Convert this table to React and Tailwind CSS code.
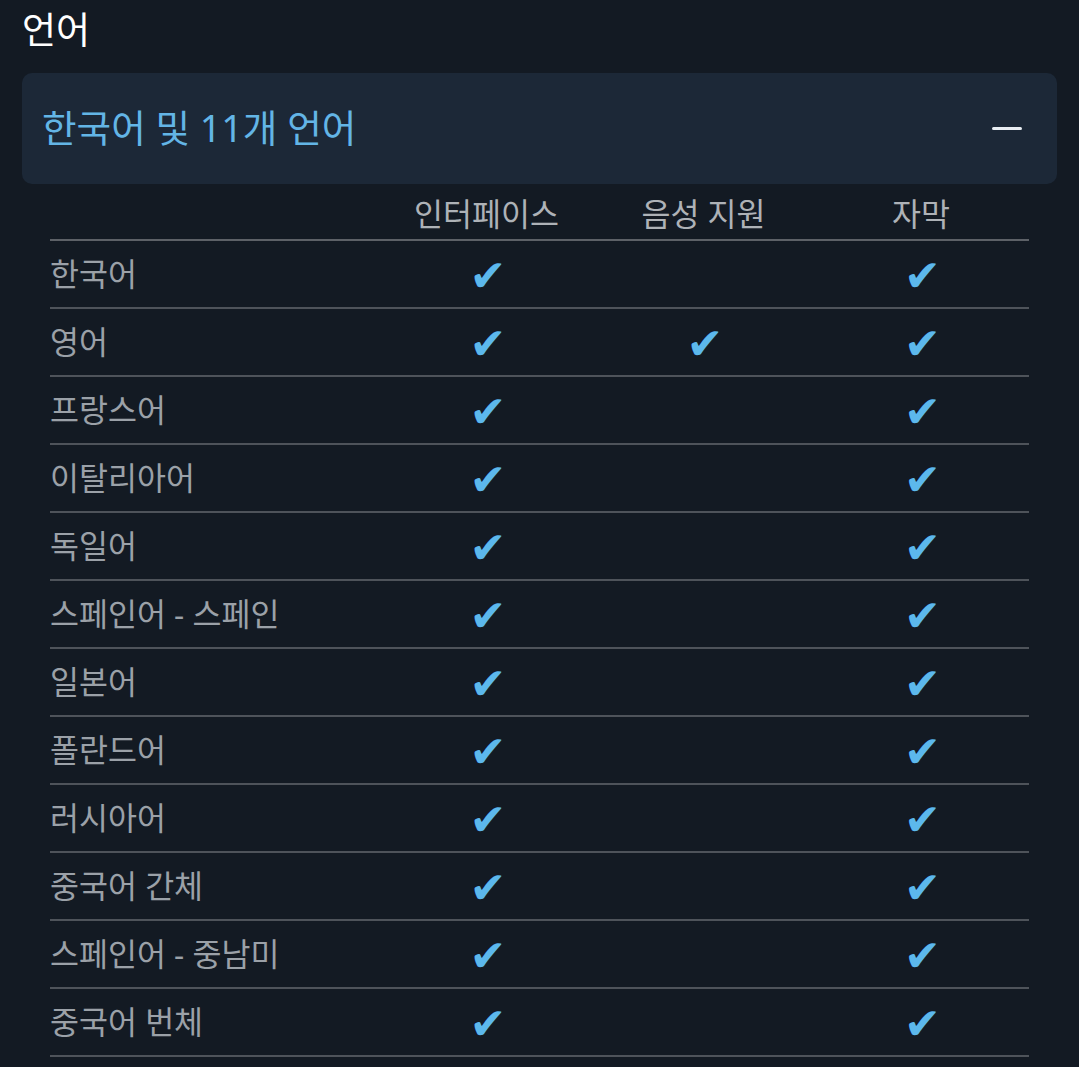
import React from 'react';

const rows = [
  ['한국어', true, false, true],
  ['영어', true, true, true],
  ['프랑스어', true, false, true],
  ['이탈리아어', true, false, true],
  ['독일어', true, false, true],
  ['스페인어 - 스페인', true, false, true],
  ['일본어', true, false, true],
  ['폴란드어', true, false, true],
  ['러시아어', true, false, true],
  ['중국어 간체', true, false, true],
  ['스페인어 - 중남미', true, false, true],
  ['중국어 번체', true, false, true],
];

const font = { fontFamily: '"Noto Sans", "Noto Sans CJK KR", sans-serif' };

function Check({ on }) {
  return (
    <span
      className="pt-[4px] pl-[3px] text-center text-[44px] leading-none text-[#5cb8ec]"
      style={{ fontFamily: '"DejaVu Sans", sans-serif' }}
    >
      {on ? '✔' : ''}
    </span>
  );
}

export default function App() {
  return (
    <div className="min-h-[1067px] w-[1079px] bg-[#131a23] pt-[6px]" style={font}>
      <h2 className="px-[22px] text-[37px] leading-[48px] text-white">언어</h2>

      <div className="mx-[22px] mt-[19px] flex h-[111px] items-center justify-between rounded-[10px] bg-[#1c2837] pl-[20px] pr-[35px]">
        <span className="text-[37.6px] text-[#63b5e6]">한국어 및 11개 언어</span>
        <span className="block h-[3px] w-[30px] rounded-full bg-[#e8edf2]" />
      </div>

      <div className="mx-[50px] mt-[6px]">
        <div className="grid h-[51px] grid-cols-[328px_217px_217px_218px] items-center border-b-2 border-[#5d6167] pb-[4px] text-[31.5px] text-[#aeb2b7]">
          <span />
          <span className="text-center">인터페이스</span>
          <span className="text-center">음성 지원</span>
          <span className="text-center">자막</span>
        </div>
        {rows.map(([name, a, b, c]) => (
          <div
            key={name}
            className="grid h-[68px] grid-cols-[328px_217px_217px_218px] items-center border-b-2 border-[#4e535a] text-[31.5px] text-[#9ba1a8]"
          >
            <span>{name}</span>
            <Check on={a} />
            <Check on={b} />
            <Check on={c} />
          </div>
        ))}
      </div>
    </div>
  );
}
